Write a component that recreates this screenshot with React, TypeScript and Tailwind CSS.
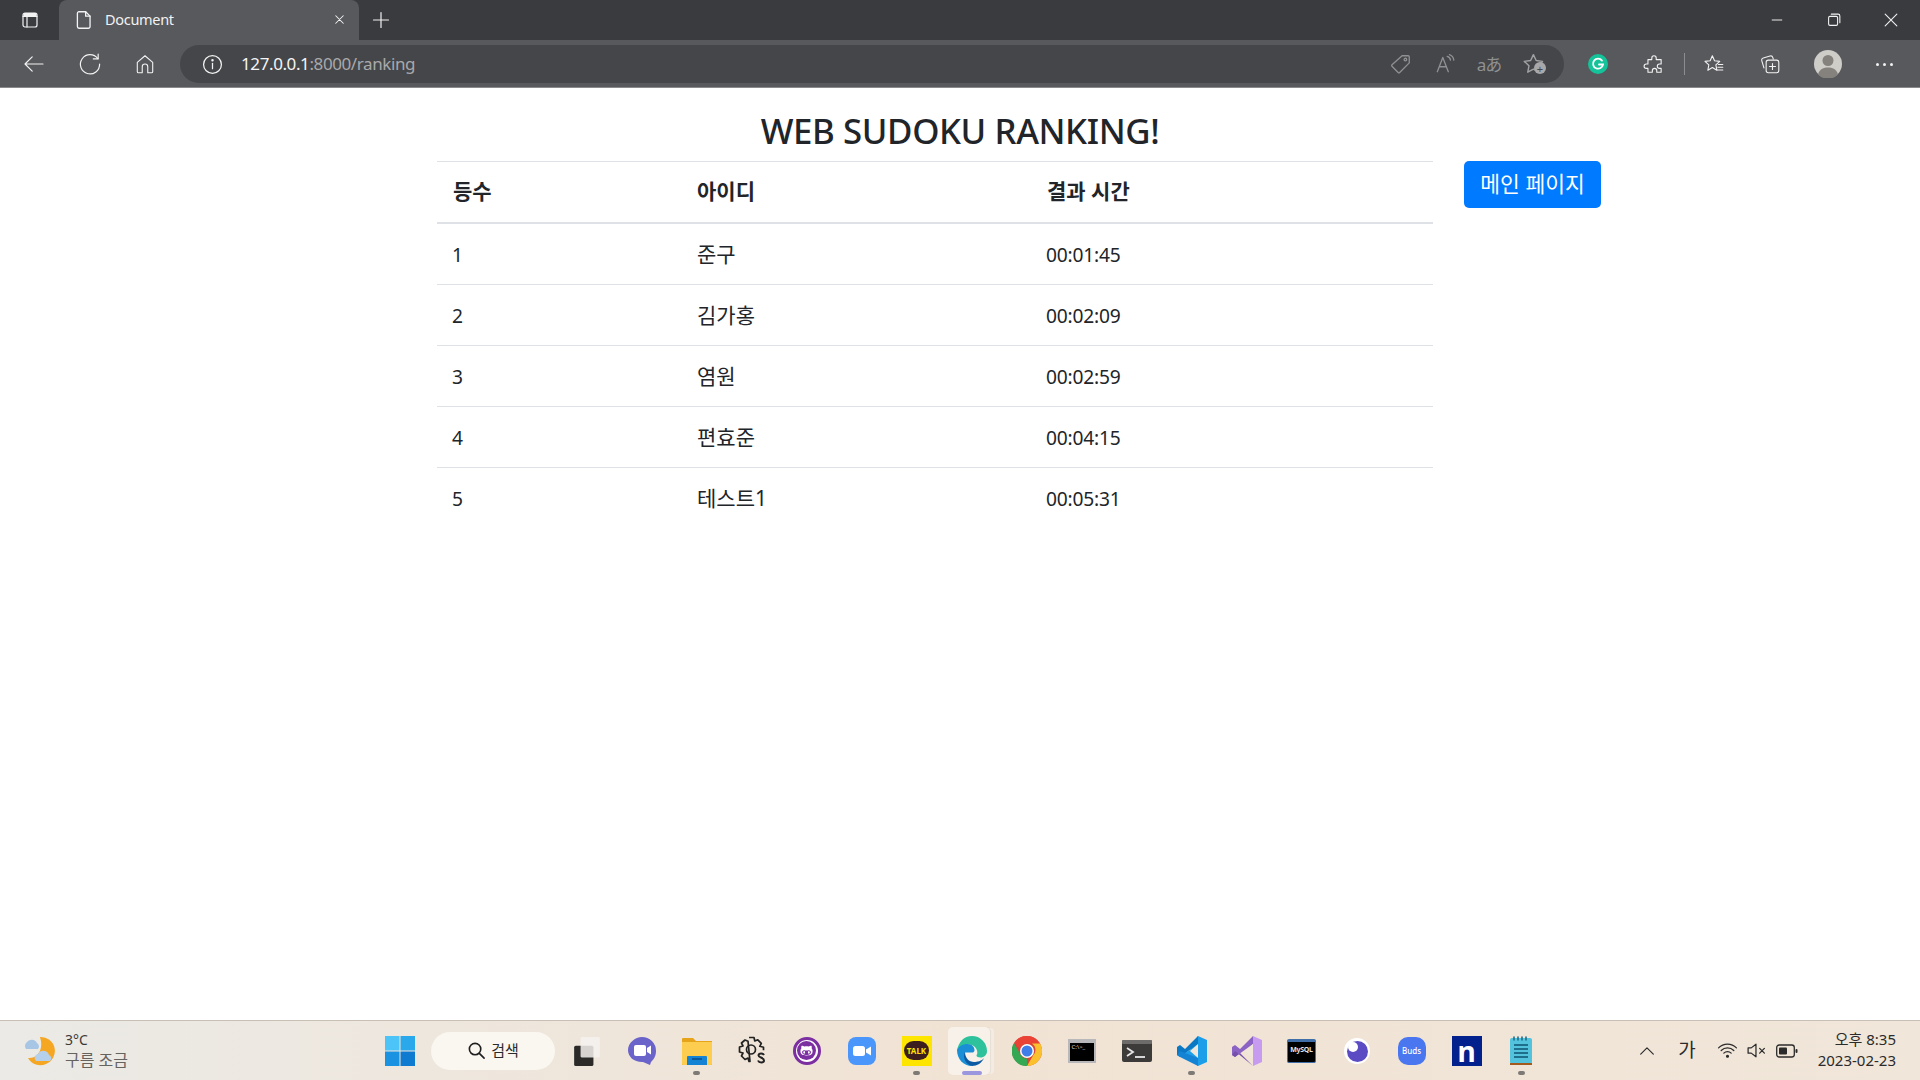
import React from 'react';
import { FaGithubAlt } from 'react-icons/fa';

const font = "font-['Noto_Sans','Noto_Sans_CJK_KR',sans-serif]";

const rankings = [
  { rank: 1, id: '준구', time: '00:01:45' },
  { rank: 2, id: '김가홍', time: '00:02:09' },
  { rank: 3, id: '염원', time: '00:02:59' },
  { rank: 4, id: '편효준', time: '00:04:15' },
  { rank: 5, id: '테스트1', time: '00:05:31' },
];

const Line: React.FC<{ size?: number; color?: string; width?: number; children: React.ReactNode }> = ({
  size = 20,
  color = '#f2f2f2',
  width = 1.2,
  children,
}) => (
  <svg width={size} height={size} viewBox="0 0 20 20" fill="none" stroke={color} strokeWidth={width} strokeLinecap="round" strokeLinejoin="round">
    {children}
  </svg>
);

const Slot: React.FC<{ className: string; children?: React.ReactNode }> = ({ className, children }) => (
  <div className={`flex shrink-0 items-center justify-center ${className}`}>{children}</div>
);

const TabStrip = () => (
  <div className="flex h-10 bg-[#3a3b3f]">
    <Slot className="w-[59px]">
      <Line>
        <rect x="3" y="3" width="14" height="14" rx="2" />
        <path d="M3 6.5h14M7 6.5V17" />
        <path d="M4 3.6h12v2.6H4z" fill="#f2f2f2" />
      </Line>
    </Slot>
    <div className="flex w-[300px] items-center rounded-t-lg bg-[#58595d] pb-[1px] pl-[14px]">
      <Line size={22}>
        <path d="M5 2.5h6.5L15.5 6.5v9.5a1.5 1.5 0 0 1-1.5 1.5H5.5A1.5 1.5 0 0 1 4 16V4a1.5 1.5 0 0 1 1-1.5z" />
        <path d="M11.5 2.5v4h4" />
      </Line>
      <span className="ml-[10px] text-[14.5px] tracking-[-0.3px] text-[#f2f2f2]">Document</span>
      <div className="ml-auto mr-[10px] flex h-5 w-5 items-center justify-center">
        <Line size={15} width={1.4}>
          <path d="M5 5l10 10M15 5L5 15" />
        </Line>
      </div>
    </div>
    <Slot className="w-[44px]">
      <Line>
        <path d="M10 2.5v15M2.5 10h15" />
      </Line>
    </Slot>
    <div className="ml-auto flex">
      <Slot className="w-[57px]">
        <Line size={16}>
          <path d="M4 10h12" />
        </Line>
      </Slot>
      <Slot className="w-[57px]">
        <Line size={18}>
          <rect x="4" y="6" width="10" height="10" rx="1.5" />
          <path d="M7 3.5h7.5A2 2 0 0 1 16.5 5.5V13" />
        </Line>
      </Slot>
      <Slot className="w-[58px]">
        <Line size={18}>
          <path d="M3.5 3.5l13 13M16.5 3.5l-13 13" />
        </Line>
      </Slot>
    </div>
  </div>
);

const Toolbar = () => (
  <div className="flex h-12 items-center border-b border-[#8a8a8c] bg-[#58595d] pl-3 pt-[1px]">
    <Slot className="w-[44px]">
      <Line size={24} width={1}>
        <path d="M17.5 10h-15M8.5 4L2.5 10l6 6" />
      </Line>
    </Slot>
    <Slot className="ml-3 w-[44px]">
      <Line size={24} width={1}>
        <path d="M16.5 5.6A8 8 0 1 0 18 10" />
        <path d="M16.8 1.8v4h-4" />
      </Line>
    </Slot>
    <Slot className="ml-[11px] w-[44px]">
      <Line size={22} width={1}>
        <path d="M3 8.5L10 2.5l7 6V17a1 1 0 0 1-1 1h-3.5v-5.5a2.5 2.5 0 0 0-5 0V18H4a1 1 0 0 1-1-1z" />
      </Line>
    </Slot>
    <div className="ml-[13px] flex h-[38px] w-[1384px] shrink-0 items-center rounded-full bg-[#454649] pl-[22px] pr-[7px]">
      <Line size={21}>
        <circle cx="10" cy="10" r="8.5" />
        <path d="M10 9v5" />
        <circle cx="10" cy="6" r=".6" fill="#f2f2f2" />
      </Line>
      <span className="ml-[18px] text-[17px] tracking-[-0.4px]">
        <span className="text-[#f5f5f5]">127.0.0.1</span>
        <span className="text-[#a9a9ab]">:8000/ranking</span>
      </span>
      <div className="ml-auto flex">
        <Slot className="w-[44px]">
          <Line size={22} color="#8f9092">
            <path d="M11 2.5h5.5a1 1 0 0 1 1 1V9l-8.7 8.7a1 1 0 0 1-1.4 0l-5.6-5.6a1 1 0 0 1 0-1.4z" />
            <circle cx="14" cy="6" r="1.2" />
          </Line>
        </Slot>
        <Slot className="w-[44px]">
          <Line size={22} color="#8f9092">
            <path d="M3 17L8 4l5 13M5 12.5h6" />
            <path d="M12 3a4 4 0 0 1 3 3.5M14 1.5a6 6 0 0 1 4 5" />
          </Line>
        </Slot>
        <Slot className="w-[44px]">
          <span className="text-[17px] leading-none tracking-[-1px] text-[#8f9092]">aあ</span>
        </Slot>
        <Slot className="relative w-[46px]">
          <Line size={24} color="#a0a1a3">
            <path d="M9.500 2.200l2.300 4.900 5.300.7-3.900 3.700 1 5.300-4.700-2.600-4.700 2.600 1-5.300-3.900-3.700 5.300-.7z" />
          </Line>
          <div className="absolute left-[23px] top-[10px] flex h-[12px] w-[12px] items-center justify-center rounded-full bg-[#a8a8aa] text-[11px] leading-none text-[#454649]">+</div>
        </Slot>
      </div>
    </div>
    <Slot className="ml-[6px] w-[56px]">
      <div className="flex h-5 w-5 items-center justify-center rounded-full bg-[#15c39a]">
        <svg width="14" height="14" viewBox="0 0 14 14" fill="none" stroke="#fff" strokeWidth="1.8" strokeLinecap="round">
          <path d="M11 3.6A5 5 0 1 0 12 7.5H8" />
        </svg>
      </div>
    </Slot>
    <Slot className="w-[56px]">
      <Line size={22} width={1}>
        <path d="M8 4.500a2 2 0 1 1 4 0V6h4.500v4H15a2 2 0 1 0 0 4h1.500v3.500H12.500V16a2 2 0 1 0-4 0v1.500H4.500V14H3a2 2 0 1 1 0-4h1.500V6H8z" />
      </Line>
    </Slot>
    <Slot className="w-1">
      <div className="h-[22px] w-[1px] bg-[#8c8d90]" />
    </Slot>
    <Slot className="w-[56px]">
      <Line size={22} width={1}>
        <path d="M8.500 2.500l2 4.600 4.700.5-3.500 3.200.9 4.900-4.100-2.500-4.100 2.500.9-4.900L1.800 7.600l4.700-.5z" />
        <path d="M14 10.500h4M13.500 13h4.500M13 15.500h5" />
      </Line>
    </Slot>
    <Slot className="w-[56px]">
      <Line size={22} width={1}>
        <rect x="6.500" y="6.500" width="11.500" height="11.500" rx="2" />
        <path d="M12.250 9.500v5.500M9.500 12.250h5.500" />
        <path d="M4.500 13.500L2.500 7a2 2 0 0 1 1.400-2.500L10 2.700a2 2 0 0 1 2.500 1.300l.5 1.500" />
      </Line>
    </Slot>
    <Slot className="w-[60px]">
      <svg width="28" height="28" viewBox="0 0 28 28">
        <circle cx="14" cy="14" r="14" fill="#cfcdc8" />
        <circle cx="14" cy="10.500" r="5.500" fill="#85827d" />
        <path d="M4 24.500C5.500 18.500 10 17.500 14 17.500s8.500 1 10 7A14 14 0 0 1 4 24.500z" fill="#85827d" />
      </svg>
    </Slot>
    <Slot className="w-[52px]">
      <div className="flex gap-[4px]">
        <div className="h-[3px] w-[3px] rounded-full bg-[#f2f2f2]" />
        <div className="h-[3px] w-[3px] rounded-full bg-[#f2f2f2]" />
        <div className="h-[3px] w-[3px] rounded-full bg-[#f2f2f2]" />
      </div>
    </Slot>
  </div>
);

const RankingPage = () => (
  <main className="h-[932px] bg-white text-[#212529]">
    <h1 className="pt-[19px] text-center text-[34.8px] font-medium leading-[48px] tracking-[-0.4px] text-[#212529]">
      WEB SUDOKU RANKING!
    </h1>
    <div className="flex pl-[437px] pt-[6px] text-[19.2px]">
      <div className="w-[996px]">
        <div className="flex h-[63px] items-center border-y-[1px] border-b-[2px] border-[#dee2e6] pb-[1px] pl-[16px] text-[21px] font-bold">
          <div className="w-[244px]">등수</div>
          <div className="w-[350px]">아이디</div>
          <div>결과 시간</div>
        </div>
        {rankings.map((row, i) => (
          <div key={row.rank} className={`flex h-[61px] items-center pl-[15px] pt-[2px] ${i < rankings.length - 1 ? 'border-b border-[#dee2e6]' : ''}`}>
            <div className="w-[245px]">{row.rank}</div>
            <div className="-mt-[3px] w-[349px] text-[21px] leading-[24px]">{row.id}</div>
            <div className="tracking-[-0.2px]">{row.time}</div>
          </div>
        ))}
      </div>
      <button className="ml-[31px] h-[47px] w-[137px] rounded-[5px] bg-[#007bff] text-[21.5px] text-white">메인 페이지</button>
    </div>
  </main>
);

const Tile: React.FC<{ dot?: boolean; children: React.ReactNode }> = ({ dot, children }) => (
  <div className="relative flex h-[60px] w-[55px] shrink-0 items-center justify-center">
    {children}
    {dot && <div className="absolute bottom-[6px] left-[24px] h-[4px] w-[7px] rounded-full bg-[#7d7a76]" />}
  </div>
);

const Taskbar = () => (
  <div className="flex h-[60px] items-center border-t border-[#c8c0b7] bg-gradient-to-r from-[#ebeae6] via-[#f1e3d4] to-[#f0e6d9]">
    <div className="flex w-[372px] shrink-0 items-center pl-[20px]">
      <svg width="36" height="32" viewBox="0 0 36 32">
        <path d="M20 2a14 14 0 0 1 6 27 14 14 0 0 1-18-6C18 24 24 14 20 2z" fill="#f5a623" />
        <path d="M6 14a5 5 0 0 1 1-7 6 6 0 0 1 10 1 4 4 0 0 1 1 6z" fill="#a7c6e6" />
        <path d="M16 26a4 4 0 0 1 2-7 6 6 0 0 1 11 1 3.500 3.500 0 0 1 1 6z" fill="#b5d0ec" />
      </svg>
      <div className="ml-[9px] pb-[2px] text-[16px] leading-[20px] text-[#3b3a39]">
        <div className="text-[14px]">3°C</div>
        <div className="text-[#66635f]">구름 조금</div>
      </div>
    </div>
    <Tile>
      <svg width="30" height="30" viewBox="0 0 30 30">
        <rect x="0" y="0" width="14.500" height="14.500" fill="#4cc4f7" />
        <rect x="15.500" y="0" width="14.500" height="14.500" fill="#2aa8ec" />
        <rect x="0" y="15.500" width="14.500" height="14.500" fill="#1a92e2" />
        <rect x="15.500" y="15.500" width="14.500" height="14.500" fill="#0e7bd0" />
      </svg>
    </Tile>
    <div className="flex w-[132px] shrink-0 justify-center">
      <div className="flex h-[38px] w-[124px] items-center justify-center gap-[5px] rounded-full bg-[#faf6f0] text-[15px] text-[#2b2b2b]">
        <Line size={19} color="#1f1f1f" width={1.700}>
          <circle cx="8.500" cy="8.500" r="6" />
          <path d="M13 13l5 5" />
        </Line>
        검색
      </div>
    </div>
    <Tile>
      <svg width="28" height="30" viewBox="0 0 26 28">
        <rect x="1" y="9" width="18" height="19" rx="1.500" fill="#2b2a29" />
        <rect x="7" y="1" width="18" height="19" rx="1" fill="#f4f1ee" opacity=".85" />
      </svg>
    </Tile>
    <Tile>
      <svg width="30" height="30" viewBox="0 0 30 30">
        <path d="M15 1a14 14 0 0 1 14 14c0 6-3 9-5 11l-1 3-7-3h-1C7 26 1 21 1 14 1 7 8 1 15 1z" fill="#6a63c9" />
        <rect x="7" y="9" width="12" height="11" rx="2" fill="#fff" />
        <path d="M20 12l4-2.500v9L20 16z" fill="#fff" />
      </svg>
    </Tile>
    <Tile dot>
      <svg width="30" height="28" viewBox="0 0 30 28">
        <path d="M0 2a1 1 0 0 1 1-1h10l3 3h16v24H0z" fill="#e5a41a" />
        <path d="M0 5h30v22a1 1 0 0 1-1 1H1a1 1 0 0 1-1-1z" fill="#fdcd4f" />
        <path d="M5 20a1 1 0 0 1 1-1h18a1 1 0 0 1 1 1v8H5z" fill="#1583d4" />
        <rect x="10" y="21" width="10" height="2" fill="#0b5a9c" />
      </svg>
    </Tile>
    <Tile>
      <svg width="30" height="30" viewBox="0 0 30 30" fill="none" stroke="#222" strokeWidth="1.700" strokeLinejoin="round">
        <path d="M12 1.500h5l.8 3.500 3-1.200 3.500 3.500-1.500 3 3.700 1v3M13 25.500h-1l-1-3.500-3 1.500-3.500-3.500 1.500-3-3.500-1v-5l3.500-1-1.500-3L8 4l3 1.200z" />
        <circle cx="14" cy="13.500" r="4.500" />
        <path d="M27 19c-1-2-5-2-5.500 0-.5 3 5.500 2 5.500 5.500 0 2.500-5 2.500-6 0" strokeWidth="2" />
      </svg>
    </Tile>
    <Tile>
      <div className="flex h-[28px] w-[28px] items-center justify-center rounded-full border-[3px] border-[#7b2fa0] bg-white">
        <div className="flex h-[19px] w-[19px] items-center justify-center rounded-full bg-[#7b2fa0]">
          <FaGithubAlt className="text-[13px] text-white" />
        </div>
      </div>
    </Tile>
    <Tile>
      <svg width="28" height="28" viewBox="0 0 28 28">
        <rect width="28" height="28" rx="8" fill="#4a96fa" />
        <rect x="5" y="9" width="12" height="10" rx="2.500" fill="#fff" />
        <path d="M18 12.500l5-3v9l-5-3z" fill="#fff" />
      </svg>
    </Tile>
    <Tile dot>
      <div className="relative flex h-[30px] w-[30px] items-center justify-center bg-[#fee500]">
        <div className="flex h-[19px] w-[25px] items-center justify-center rounded-full bg-[#3c1e1e] text-[8px] font-bold leading-none text-[#fee500]">TALK</div>
      </div>
    </Tile>
    <div className="relative flex h-[60px] w-[55px] shrink-0 items-center justify-center">
      <div className="absolute left-[4px] top-[6px] h-[48px] w-[42px] rounded-[5px] bg-[#f7f1ea] shadow-[1px_0_1px_rgba(0,0,0,0.06),5px_0_0_-1px_#f4ece2]" />
      <svg className="relative" width="30" height="30" viewBox="0 0 30 30">
        <path d="M15 0a15 15 0 0 1 15 15c0 4-3 6.500-6.500 6.500-2.500 0-4-1-4-2 0-.6.800-.9.800-3 0-4-3.500-8-8.300-8-4 0-8.500 2-12 6C1.500 6 7 0 15 0z" fill="#2ec29c" />
        <path d="M0 14c2-4 6-6 10.500-6 4.500 0 7 3 7 6 0 1-.5 2-1.500 2.500H8c-.8 4 1.500 9 7 13.500C6.500 30 0 23 0 14z" fill="#1b8fd6" />
        <path d="M8 16c0 6 4 10 9 10 3 0 8-1 10-4-2 5-7 8-12 8-6-1-10-9-7-14z" fill="#0c59a4" />
      </svg>
      <div className="absolute bottom-[6px] left-[18px] h-[4px] w-[20px] rounded-full bg-[#9b97de]" />
    </div>
    <Tile>
      <svg width="30" height="30" viewBox="0 0 30 30">
        <circle cx="15" cy="15" r="15" fill="#db4437" />
        <path d="M15 0a15 15 0 0 1 13 7.500H15a7.500 7.500 0 0 0-7 4.800L2 7A15 15 0 0 1 15 0z" fill="#ea4335" />
        <path d="M28 7.500A15 15 0 0 1 15 30l6.500-11.200A7.500 7.500 0 0 0 20 7.500z" fill="#fbc02d" />
        <path d="M2 7l6.500 11.500A7.500 7.500 0 0 0 15 22.500l-0 7.500A15 15 0 0 1 2 7z" fill="#34a853" />
        <circle cx="15" cy="15" r="7" fill="#fff" />
        <circle cx="15" cy="15" r="5.500" fill="#3f7ee8" />
      </svg>
    </Tile>
    <Tile>
      <div className="h-[24px] w-[28px] border-[2px] border-t-[4px] border-[#b8b8ba] bg-black pl-[2px] text-[6px] leading-[8px] text-[#dcdcdc]">C:\&gt;_</div>
    </Tile>
    <Tile>
      <svg width="30" height="22" viewBox="0 0 30 22">
        <rect width="30" height="22" rx="2" fill="#3c3b3a" />
        <rect width="30" height="4" rx="1" fill="#6d6c6b" />
        <path d="M5 8l6 4-6 4" fill="none" stroke="#e8e8e8" strokeWidth="1.800" />
        <path d="M13 17h10" stroke="#e8e8e8" strokeWidth="1.800" />
      </svg>
    </Tile>
    <Tile dot>
      <svg width="30" height="30" viewBox="0 0 30 30">
        <path d="M21 0l9 4v22l-9 4L8 17l5-3z" fill="#1c9fe8" />
        <path d="M21 0L8 13 3 9 0 11v8l3 2 18-13z" fill="#0a78c5" />
        <path d="M3 21l-3-2 3-4 18 7v8z" fill="#1583d4" />
        <path d="M21 8v14l-8-7z" fill="#f0e6d9" />
      </svg>
    </Tile>
    <Tile>
      <svg width="30" height="30" viewBox="0 0 30 30">
        <path d="M21 0l9 4v22l-9 4z" fill="#c79cf0" />
        <path d="M21 0L8 13 3 9 0 11v8l3 2L21 8z" fill="#8b63c4" />
        <path d="M3 21l-3-2 3-4 18 15L8 17z" fill="#7750ab" />
        <path d="M21 8v14l-8-7z" fill="#f0e6d9" />
      </svg>
    </Tile>
    <Tile>
      <div className="h-[24px] w-[29px] rounded-[2px] border-[1px] border-t-[3px] border-[#3f6ea8] bg-black text-center text-[7px] font-bold leading-[16px] tracking-[-0.3px] text-[#e5e5e5]">MySQL</div>
    </Tile>
    <Tile>
      <svg width="26" height="26" viewBox="0 0 26 26">
        <circle cx="13" cy="13" r="13" fill="#fff" />
        <circle cx="13.500" cy="13.500" r="10.500" fill="#5b4cc4" />
        <circle cx="9" cy="9" r="5" fill="#fff" />
      </svg>
    </Tile>
    <Tile>
      <div className="flex h-[28px] w-[28px] items-center justify-center rounded-[10px] bg-[#4a76f0] text-[8px] font-medium leading-none text-white">Buds</div>
    </Tile>
    <Tile>
      <div className="flex h-[30px] w-[30px] items-center justify-center bg-[#03218c] text-[28px] font-bold leading-none text-white">n</div>
    </Tile>
    <Tile dot>
      <svg width="24" height="30" viewBox="0 0 24 30">
        <rect x="0" y="2" width="22" height="26" rx="2" fill="#52c2dd" />
        <rect x="0" y="27" width="22" height="2" fill="#a35a1f" />
        <path d="M4 9h14M4 13h14M4 17h14M4 21h14" stroke="#1d6f8c" strokeWidth="2" />
        <path d="M4 1v3M8 1v3M12 1v3M16 1v3" stroke="#1d6f8c" strokeWidth="1.600" strokeLinecap="round" />
      </svg>
    </Tile>
    <Slot className="ml-[84px] w-[28px]">
      <Line size={18} color="#2b2b2b" width={1.300}>
        <path d="M3 13.500L10 6.500l7 7" />
      </Line>
    </Slot>
    <Slot className="ml-[12px] w-[28px] text-[19px] leading-none text-[#2b2b2b]">가</Slot>
    <Slot className="ml-[12px] w-[28px]">
      <Line size={21} color="#2b2b2b" width={1.200}>
        <path d="M1.500 7.500a12 12 0 0 1 17 0M4 10a8.500 8.500 0 0 1 12 0M6.500 12.500a5 5 0 0 1 7 0" />
        <circle cx="10" cy="15.500" r=".9" fill="#2b2b2b" />
      </Line>
    </Slot>
    <Slot className="ml-[1px] w-[28px]">
      <Line size={21} color="#2b2b2b" width={1.200}>
        <path d="M2 7.500h3L9.500 4v12L5 12.500H2z" />
        <path d="M13 8l4.500 4.500M17.500 8L13 12.500" />
      </Line>
    </Slot>
    <Slot className="ml-[3px] w-[28px]">
      <svg width="22" height="14" viewBox="0 0 22 14">
        <rect x=".7" y="1" width="17.600" height="12" rx="2.500" fill="none" stroke="#2b2b2b" strokeWidth="1.300" />
        <rect x="3" y="3.500" width="8" height="7" rx="1" fill="#2b2b2b" />
        <rect x="19.500" y="5" width="2" height="4" rx="1" fill="#2b2b2b" />
      </svg>
    </Slot>
    <div className="ml-auto pb-[2px] pr-[24px] text-right text-[15px] leading-[21px] text-[#2b2b2b]">
      <div>오후 8:35</div>
      <div>2023-02-23</div>
    </div>
  </div>
);

export default function App() {
  return (
    <div className={`h-[1080px] w-[1920px] overflow-hidden ${font}`}>
      <TabStrip />
      <Toolbar />
      <RankingPage />
      <Taskbar />
    </div>
  );
}
